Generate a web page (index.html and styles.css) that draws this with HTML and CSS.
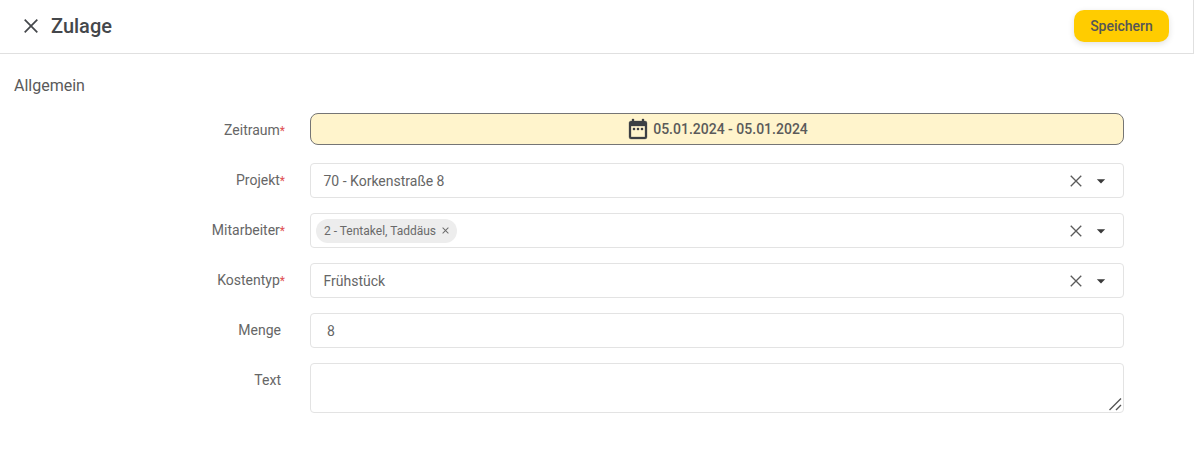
FILE: index.html
```html
<!DOCTYPE html>
<html lang="de">
<head>
<meta charset="utf-8">
<title>Zulage</title>
<link rel="stylesheet" href="styles.css">
</head>
<body>
<header class="topbar">
  <div class="title-group">
    <svg class="close-icon" width="24" height="24" viewBox="0 0 24 24"><path d="M5.7 5.7 18.3 18.3M18.3 5.7 5.7 18.3"/></svg>
    <h1 class="title">Zulage</h1>
  </div>
  <button class="save">Speichern</button>
</header>
<main class="content">
  <h2 class="section">Allgemein</h2>
  <form class="form">
    <div class="row row-date">
      <label class="label">Zeitraum<span class="req">*</span></label>
      <div class="date">
        <svg width="24" height="24" viewBox="0 0 24 24"><path d="M19 3h-1V1h-2v2H8V1H6v2H5c-1.11 0-2 .9-2 2v14a2 2 0 0 0 2 2h14a2 2 0 0 0 2-2V5a2 2 0 0 0-2-2zm0 16H5V8h14v11zM7 10h2v2H7zm4 0h2v2h-2zm4 0h2v2h-2z"/></svg>
        <span>05.01.2024 - 05.01.2024</span>
      </div>
    </div>
    <div class="row">
      <label class="label">Projekt<span class="req">*</span></label>
      <div class="field select"><span class="value">70 - Korkenstraße 8</span>
        <svg class="clear" width="20" height="20" viewBox="0 0 24 24"><path d="M5.7 5.7 18.3 18.3M18.3 5.7 5.7 18.3"/></svg>
        <svg class="arrow" width="20" height="20" viewBox="0 0 24 24"><path d="m7 10 5 5 5-5z"/></svg>
      </div>
    </div>
    <div class="row">
      <label class="label">Mitarbeiter<span class="req">*</span></label>
      <div class="field select chips"><span class="chip">2 - Tentakel, Taddäus
          <svg width="11" height="11" viewBox="0 0 24 24"><path d="M19 6.41 17.59 5 12 10.59 6.41 5 5 6.41 10.59 12 5 17.59 6.41 19 12 13.41 17.59 19 19 17.59 13.41 12z"/></svg></span>
        <svg class="clear" width="20" height="20" viewBox="0 0 24 24"><path d="M5.7 5.7 18.3 18.3M18.3 5.7 5.7 18.3"/></svg>
        <svg class="arrow" width="20" height="20" viewBox="0 0 24 24"><path d="m7 10 5 5 5-5z"/></svg>
      </div>
    </div>
    <div class="row">
      <label class="label">Kostentyp<span class="req">*</span></label>
      <div class="field select"><span class="value">Frühstück</span>
        <svg class="clear" width="20" height="20" viewBox="0 0 24 24"><path d="M5.7 5.7 18.3 18.3M18.3 5.7 5.7 18.3"/></svg>
        <svg class="arrow" width="20" height="20" viewBox="0 0 24 24"><path d="m7 10 5 5 5-5z"/></svg>
      </div>
    </div>
    <div class="row">
      <label class="label plain">Menge</label>
      <div class="field number"><span class="value">8</span></div>
    </div>
    <div class="row">
      <label class="label plain">Text</label>
      <div class="field textarea">
        <svg class="grip" width="14" height="14" viewBox="0 0 14 14"><path d="M1.5 13 13 1.5M8 13l5-5"/></svg>
      </div>
    </div>
  </form>
</main>
</body>
</html>
```

FILE: styles.css
```css
* { box-sizing: border-box; }
html, body { margin: 0; padding: 0; }
body {
  width: 1194px;
  height: 459px;
  overflow: hidden;
  background: #fff;
  font-family: Roboto, "Liberation Sans", sans-serif;
  color: #555;
  font-size: 14px;
}
.topbar {
  height: 54px;
  display: flex;
  align-items: center;
  justify-content: space-between;
  padding: 0 24px 1px 19px;
  border-bottom: 1px solid #e0e0e0;
  border-right: 1px solid #e0e0e0;
}
.title-group { display: flex; align-items: center; gap: 8px; }
.close-icon { fill: none; stroke: #44474b; stroke-width: 1.7; }
.title { margin: 0; font-size: 20px; font-weight: 500; color: #44474b; line-height: 24px; }
.save {
  width: 95px;
  height: 32px;
  border: 0;
  border-radius: 10px;
  background: #ffcc00;
  color: #565656;
  font: 500 14px Roboto, sans-serif;
  box-shadow: 0 2px 6px rgba(0, 0, 0, .12);
  padding: 0;
}
.content { padding: 22px 70px 0 14px; }
.section { margin: 0 0 17px; font-size: 16px; font-weight: 400; line-height: 20px; color: #5a5a5a; }
.form { display: flex; flex-direction: column; gap: 15px; }
.row { display: grid; grid-template-columns: 272px 814px; column-gap: 24px; align-items: flex-start; }
.row-date { margin-bottom: 3px; }
.label { text-align: right; line-height: 20px; padding: 7px 1px 0 0; color: #666; }
.label.plain { padding-right: 5px; }
.req { color: #e05050; font-size: 12px; }
.date {
  height: 32px;
  display: flex;
  align-items: center;
  justify-content: center;
  gap: 3px;
  background: #fff4cc;
  border: 1px solid #757575;
  border-radius: 8px;
  font-weight: 500;
  color: #5a5a5a;
}
.date svg { fill: #3c4043; stroke: #3c4043; stroke-width: .3; margin-top: 2px; }
.field {
  height: 35px;
  display: flex;
  align-items: center;
  background: #fff;
  border: 1px solid #e3e3e3;
  border-radius: 4px;
  padding-left: 12.5px;
}
.value { flex: 1; color: #666; }
.clear { fill: none; stroke: #5a5a5a; stroke-width: 1.6; margin-right: 5px; }
.arrow { fill: #3a3a3a; margin-right: 12px; }
.chips { padding-left: 5px; }
.chip {
  height: 24px;
  display: flex;
  align-items: center;
  gap: 4px;
  padding: 0 6px 0 8px;
  margin-right: auto;
  border-radius: 12px;
  background: #ededed;
  font-size: 12px;
  color: #6a6a6a;
}
.chip svg { fill: #6a6a6a; }
.number { padding-left: 16px; }
.textarea {
  height: 50px;
  position: relative;
}
.grip {
  position: absolute;
  right: 1px;
  bottom: 1px;
  fill: none;
  stroke: #555;
  stroke-width: 1.4;
}
```
